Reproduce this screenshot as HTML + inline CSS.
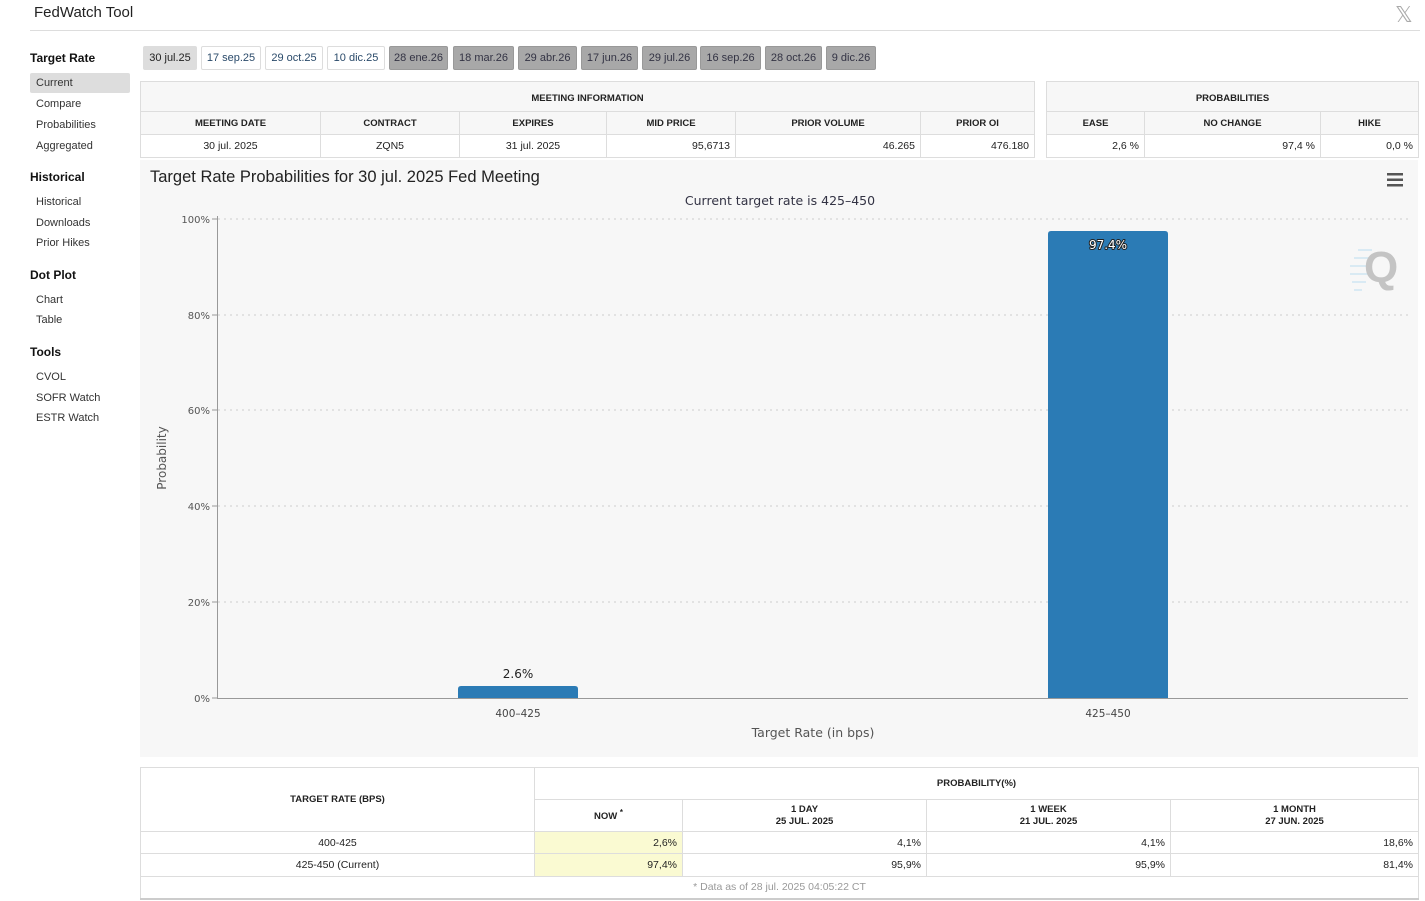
<!DOCTYPE html>
<html><head><meta charset="utf-8"><style>
*{margin:0;padding:0;box-sizing:border-box}
body{width:1425px;height:901px;background:#fff;font-family:"Liberation Sans",Arial,sans-serif;color:#222;position:relative;overflow:hidden}
.a{position:absolute}
.title{left:34px;top:4px;font-size:15px;color:#222}
.hr{left:30px;top:30px;width:1390px;height:1px;background:#ddd}
.side h{position:absolute;left:30px;font-size:12px;font-weight:bold;color:#111}
.side i{position:absolute;left:36px;font-size:11px;font-style:normal;color:#333}
.btn{position:absolute;top:46px;height:24px;font-size:11px;line-height:23px;text-align:center;border:1px solid #ddd;border-radius:2px;color:#2a4a6a;background:#fff}
.btn.g{background:#a8a8a8;border-color:#999;color:#334}
.btn.s{background:#ddd;color:#222;border-color:#ddd}
table{border-collapse:collapse;position:absolute;font-size:10.5px}
td{border:1px solid #ddd;padding:0 5px}
.hd td{background:#f7f7f7;font-weight:bold;text-align:center;font-size:9.5px}
.r{text-align:right}.c{text-align:center}
.chart{left:140px;top:160px;width:1278px;height:597px;background:#f7f7f7}
</style></head><body>
<div class="a title">FedWatch Tool</div>
<div class="a" style="left:1395px;top:2px;font-size:22px;color:#aaa;font-family:'Liberation Serif',serif">𝕏</div>
<div class="a hr"></div>
<div class="side">
<h style="top:51px">Target Rate</h>
<div class="a" style="left:30px;top:73px;width:100px;height:20px;background:#ddd;border-radius:2px"></div>
<i style="top:77px">Current</i><i style="top:98px">Compare</i><i style="top:119px">Probabilities</i><i style="top:140px">Aggregated</i>
<h style="top:170px">Historical</h>
<i style="top:196px">Historical</i><i style="top:217px">Downloads</i><i style="top:237px">Prior Hikes</i>
<h style="top:268px">Dot Plot</h>
<i style="top:294px">Chart</i><i style="top:314px">Table</i>
<h style="top:345px">Tools</h>
<i style="top:371px">CVOL</i><i style="top:392px">SOFR Watch</i><i style="top:412px">ESTR Watch</i>
</div>
<div class="btn s" style="left:143px;width:54px">30 jul.25</div>
<div class="btn" style="left:201px;width:60px">17 sep.25</div>
<div class="btn" style="left:265px;width:58px">29 oct.25</div>
<div class="btn" style="left:327px;width:58px">10 dic.25</div>
<div class="btn g" style="left:389px;width:59px">28 ene.26</div>
<div class="btn g" style="left:453px;width:61px">18 mar.26</div>
<div class="btn g" style="left:518px;width:59px">29 abr.26</div>
<div class="btn g" style="left:581px;width:57px">17 jun.26</div>
<div class="btn g" style="left:642px;width:55px">29 jul.26</div>
<div class="btn g" style="left:700px;width:61px">16 sep.26</div>
<div class="btn g" style="left:765px;width:57px">28 oct.26</div>
<div class="btn g" style="left:826px;width:50px">9 dic.26</div>

<table style="left:140px;top:81px;width:895px">
<tr class="hd" style="height:30px"><td colspan="6" style="padding-top:3px">MEETING INFORMATION</td></tr>
<tr class="hd" style="height:23px"><td style="width:180px">MEETING DATE</td><td style="width:139px">CONTRACT</td><td style="width:147px">EXPIRES</td><td style="width:129px">MID PRICE</td><td style="width:185px">PRIOR VOLUME</td><td>PRIOR OI</td></tr>
<tr style="height:23px"><td class="c">30 jul. 2025</td><td class="c">ZQN5</td><td class="c">31 jul. 2025</td><td class="r">95,6713</td><td class="r">46.265</td><td class="r">476.180</td></tr>
</table>
<table style="left:1046px;top:81px;width:373px">
<tr class="hd" style="height:30px"><td colspan="3" style="padding-top:3px">PROBABILITIES</td></tr>
<tr class="hd" style="height:23px"><td style="width:98px">EASE</td><td style="width:176px">NO CHANGE</td><td>HIKE</td></tr>
<tr style="height:23px"><td class="r">2,6 %</td><td class="r">97,4 %</td><td class="r">0,0 %</td></tr>
</table>

<div class="a chart">
<svg width="1278" height="597" style="position:absolute;left:0;top:0">
<g stroke="#ccc" stroke-dasharray="2,4">
<line x1="78" x2="1268" y1="59" y2="59"/><line x1="78" x2="1268" y1="155" y2="155"/><line x1="78" x2="1268" y1="250" y2="250"/><line x1="78" x2="1268" y1="346" y2="346"/><line x1="78" x2="1268" y1="442" y2="442"/>
</g>
<line x1="77.5" x2="77.5" y1="56" y2="538" stroke="#999"/>
<line x1="77" x2="1268" y1="538.5" y2="538.5" stroke="#999"/>
<g stroke="#999"><line x1="72" x2="77" y1="59" y2="59"/><line x1="72" x2="77" y1="155" y2="155"/><line x1="72" x2="77" y1="250" y2="250"/><line x1="72" x2="77" y1="346" y2="346"/><line x1="72" x2="77" y1="442" y2="442"/><line x1="72" x2="77" y1="538" y2="538"/></g>
<path d="M318 538V529q0-3 3-3h114q3 0 3 3V538Z" fill="#2b7bb5"/>
<path d="M908 538V74q0-3 3-3h114q3 0 3 3V538Z" fill="#2b7bb5"/>
<g font-family="DejaVu Sans,Verdana,sans-serif" font-size="10" fill="#555" text-anchor="end">
<text x="70" y="63">100%</text><text x="70" y="159">80%</text><text x="70" y="254">60%</text><text x="70" y="350">40%</text><text x="70" y="446">20%</text><text x="70" y="542">0%</text>
</g>
<g font-family="DejaVu Sans,Verdana,sans-serif" text-anchor="middle">
<text x="378" y="557" font-size="10.5" fill="#444">400–425</text>
<text x="968" y="557" font-size="10.5" fill="#444">425–450</text>
<text x="673" y="577" font-size="12.5" fill="#555">Target Rate (in bps)</text>
<text x="640" y="45" font-size="12.5" fill="#334">Current target rate is 425–450</text>
<text x="378" y="518" font-size="12" fill="#222">2.6%</text>
<text x="968" y="89" font-size="12" fill="#fff" stroke="#222" stroke-width="2" paint-order="stroke" stroke-linejoin="round">97.4%</text>
<text transform="translate(26,298) rotate(-90)" font-size="12" fill="#555">Probability</text>
</g>
<text x="10" y="22" font-family="Liberation Sans,Arial,sans-serif" font-size="16.5" fill="#222">Target Rate Probabilities for 30 jul. 2025 Fed Meeting</text>
<g fill="#555"><rect x="1247" y="13" width="16" height="2.5"/><rect x="1247" y="18.5" width="16" height="2.5"/><rect x="1247" y="24" width="16" height="2.5"/></g>
<g stroke="#cfe6f2" stroke-width="1.5"><line x1="1218" y1="90" x2="1232" y2="90"/><line x1="1214" y1="98" x2="1232" y2="98"/><line x1="1210" y1="106" x2="1232" y2="106"/><line x1="1210" y1="114" x2="1230" y2="114"/><line x1="1212" y1="122" x2="1226" y2="122"/><line x1="1214" y1="130" x2="1222" y2="130"/></g>
<text x="1224" y="122" font-family="Liberation Sans,Arial,sans-serif" font-weight="bold" font-size="44" fill="#c4c4c4">Q</text>
</svg>
</div>

<table style="left:140px;top:767px;width:1279px">
<tr class="hd" style="height:32px"><td rowspan="2" style="width:394px;background:#fff">TARGET RATE (BPS)</td><td colspan="4" style="background:#fff">PROBABILITY(%)</td></tr>
<tr class="hd" style="height:32px;line-height:12px"><td style="width:148px;background:#fff">NOW <sup>*</sup></td><td style="width:244px;background:#fff">1 DAY<br>25 JUL. 2025</td><td style="width:244px;background:#fff">1 WEEK<br>21 JUL. 2025</td><td style="background:#fff">1 MONTH<br>27 JUN. 2025</td></tr>
<tr style="height:22px"><td class="c">400-425</td><td class="r" style="background:#fafad2">2,6%</td><td class="r">4,1%</td><td class="r">4,1%</td><td class="r">18,6%</td></tr>
<tr style="height:23px"><td class="c">425-450 (Current)</td><td class="r" style="background:#fafad2">97,4%</td><td class="r">95,9%</td><td class="r">95,9%</td><td class="r">81,4%</td></tr>
<tr style="height:22px"><td colspan="5" class="c" style="color:#999;border-bottom:2px solid #ccc">* Data as of 28 jul. 2025 04:05:22 CT</td></tr>
</table>
</body></html>
